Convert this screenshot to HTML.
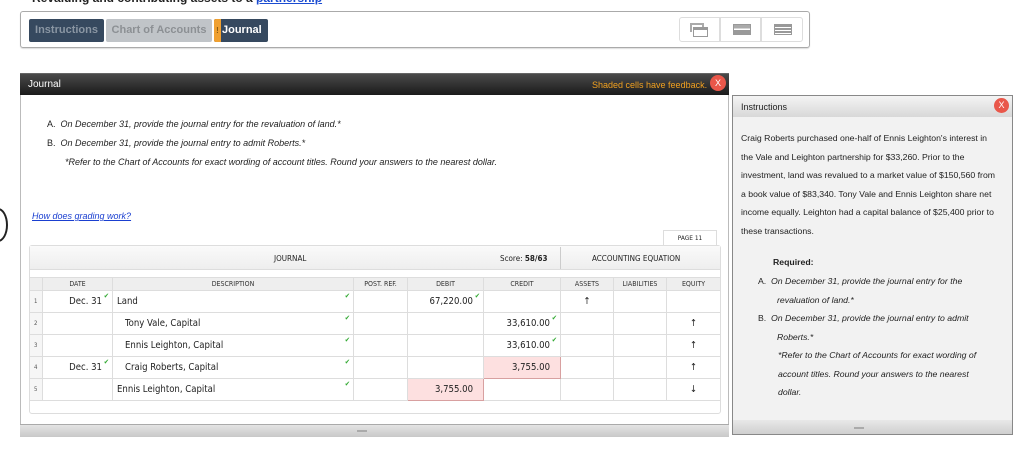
<!DOCTYPE html>
<html><head><meta charset="utf-8"><style>
*{box-sizing:border-box;margin:0;padding:0}
body{width:1024px;height:461px;overflow:hidden;background:#fff;font-family:"Liberation Sans",sans-serif;position:relative;color:#222}
.a{position:absolute}
.tab{position:absolute;top:19px;height:23px;font-size:11px;font-weight:bold;line-height:23px;border-radius:2px;text-align:center}
.ic{position:absolute;top:17px;width:41px;height:25px;border:1px solid #ddd}
.jt{font-family:"DejaVu Sans Condensed","Liberation Sans Narrow","Liberation Sans",sans-serif;font-size:9px;color:#222}
table{border-collapse:collapse;table-layout:fixed;position:absolute;left:29px;top:277px;width:691px}
td{border:1px solid #ddd;height:22px;font-family:"DejaVu Sans Condensed","Liberation Sans Narrow",sans-serif;font-size:9.5px;padding:0 4px;position:relative;color:#222;white-space:nowrap}
tr.h td{height:13px;background:#eee;font-size:7px;text-align:center;color:#333}
.r{text-align:right;padding-right:10px}
.c{text-align:center}
.n{font-size:6px;color:#555;background:#f6f6f6}
.ck{position:absolute;top:1px;right:3px;color:#3a3;font-size:7px}
.bad{background:#fde0e0;border:1px solid #d8a0a0}
</style></head><body>
<div class="a" style="left:32px;top:-9px;font-size:12px;font-weight:bold;color:#222">Revaluing and contributing assets to a <span style="color:#1a4bd1;text-decoration:underline">partnership</span></div>
<div class="a" style="left:20px;top:11px;width:790px;height:37px;border:1px solid #aaa;border-radius:3px;box-shadow:0 1px 1px #ddd"></div>
<div class="tab" style="left:29px;width:75px;background:#36495f;color:#8a96a3">Instructions</div>
<div class="tab" style="left:106px;width:106px;background:#c0c4c8;color:#8c9094">Chart of Accounts</div>
<div class="tab" style="left:214px;width:54px;background:#36495f;color:#fff;text-align:left;padding-left:8px;overflow:hidden"><span style="position:absolute;left:0;top:0;width:7px;height:23px;background:#f0a030;color:#8a5a10;font-size:8px;text-align:center">!</span>Journal</div>
<div class="ic" style="left:679px;border-radius:3px 0 0 3px"><div class="a" style="left:10px;top:5px;width:14px;height:9px;border:2px solid #aaa;border-bottom:none"></div><div class="a" style="left:13px;top:9px;width:15px;height:10px;border:1px solid #999;border-top:3px solid #999;background:#fff"></div></div>
<div class="ic" style="left:720px"><div class="a" style="left:12px;top:6px;width:18px;height:11px;border:1px solid #999;background:linear-gradient(#aaa 0 40%,#fff 40% 55%,#999 55%)"></div></div>
<div class="ic" style="left:761px;width:42px;border-radius:0 3px 3px 0"><div class="a" style="left:12px;top:6px;width:18px;height:11px;border:1px solid #999;background:repeating-linear-gradient(#999 0 2px,#fff 2px 3px)"></div></div>
<div class="a" style="left:-12px;top:208px;width:20px;height:34px;border:2px solid #222;border-radius:50%"></div>
<div class="a" style="left:20px;top:73px;width:709px;height:364px;border:1px solid #bbb;border-top:none"></div>
<div class="a" style="left:20px;top:73px;width:709px;height:22px;background:linear-gradient(#4a4a4a,#1a1a1a);border-top:1px solid #666"></div>
<div class="a" style="left:28px;top:79px;font-size:10px;color:#fff">Journal</div>
<div class="a" style="left:592px;top:80px;font-size:9px;color:#f0a020">Shaded cells have feedback.</div>
<div class="a" style="left:710px;top:75px;width:16px;height:16px;border-radius:50%;background:#e9574a;color:#fff;font-size:9px;text-align:center;line-height:16px">X</div>
<div class="a" style="left:47px;top:115px;font-size:9px;font-style:italic;line-height:19px"><span style="font-style:normal">A.</span>&nbsp; On December 31, provide the journal entry for the revaluation of land.*<br><span style="font-style:normal">B.</span>&nbsp; On December 31, provide the journal entry to admit Roberts.*<br><span style="padding-left:18px">*Refer to the Chart of Accounts for exact wording of account titles. Round your answers to the nearest dollar.</span></div>
<div class="a" style="left:32px;top:211px;font-size:9px;font-style:italic;color:#1a3fd0;text-decoration:underline">How does grading work?</div>
<div class="a jt" style="left:663px;top:230px;width:54px;height:16px;border:1px solid #ddd;border-bottom:none;font-size:6.5px;text-align:center;line-height:14px;background:#fff">PAGE 11</div>
<div class="a" style="left:29px;top:245px;width:692px;height:169px;border:1px solid #ddd;border-radius:3px"></div>
<div class="a" style="left:30px;top:246px;width:690px;height:24px;background:linear-gradient(#fafafa,#eee);border-bottom:1px solid #ddd"></div>
<div class="a jt" style="left:274px;top:254px;font-size:8px">JOURNAL</div>
<div class="a jt" style="left:500px;top:254px;font-size:8px">Score: <b>58/63</b></div>
<div class="a" style="left:560px;top:247px;width:1px;height:22px;background:#ccc"></div>
<div class="a jt" style="left:592px;top:254px;font-size:8px">ACCOUNTING EQUATION</div>
<table>
<colgroup><col style="width:13px"><col style="width:70px"><col style="width:241px"><col style="width:54px"><col style="width:76px"><col style="width:77px"><col style="width:53px"><col style="width:53px"><col style="width:54px"></colgroup>
<tr class="h"><td></td><td>DATE</td><td>DESCRIPTION</td><td>POST. REF.</td><td>DEBIT</td><td>CREDIT</td><td>ASSETS</td><td>LIABILITIES</td><td>EQUITY</td></tr>
<tr><td class="n">1</td><td class="r">Dec. 31<span class="ck">✔</span></td><td>Land<span class="ck">✔</span></td><td></td><td class="r">67,220.00<span class="ck">✔</span></td><td></td><td class="c">↑</td><td></td><td></td></tr>
<tr><td class="n">2</td><td></td><td style="padding-left:12px">Tony Vale, Capital<span class="ck">✔</span></td><td></td><td></td><td class="r">33,610.00<span class="ck">✔</span></td><td></td><td></td><td class="c">↑</td></tr>
<tr style="border-bottom:1px solid #666"><td class="n">3</td><td></td><td style="padding-left:12px">Ennis Leighton, Capital<span class="ck">✔</span></td><td></td><td></td><td class="r">33,610.00<span class="ck">✔</span></td><td></td><td></td><td class="c">↑</td></tr>
<tr><td class="n">4</td><td class="r">Dec. 31<span class="ck">✔</span></td><td style="padding-left:12px">Craig Roberts, Capital<span class="ck">✔</span></td><td></td><td></td><td class="r bad">3,755.00</td><td></td><td></td><td class="c">↑</td></tr>
<tr><td class="n">5</td><td></td><td>Ennis Leighton, Capital<span class="ck">✔</span></td><td></td><td class="r bad">3,755.00</td><td></td><td></td><td></td><td class="c">↓</td></tr>
</table>
<div class="a" style="left:20px;top:424px;width:709px;height:13px;background:linear-gradient(#e4e4e4,#c8c8c8);border-top:1px solid #aaa"></div>
<div class="a" style="left:357px;top:430px;width:10px;height:2px;background:#aaa"></div>
<div class="a" style="left:732px;top:95px;width:281px;height:340px;background:#f2f2f2;border:1px solid #888"></div>
<div class="a" style="left:733px;top:96px;width:279px;height:21px;background:linear-gradient(#f4f4f4,#d8d8d8)"></div>
<div class="a" style="left:741px;top:102px;font-size:9px">Instructions</div>
<div class="a" style="left:994px;top:98px;width:15px;height:15px;border-radius:50%;background:#e9574a;color:#fff;font-size:9px;text-align:center;line-height:15px">X</div>
<div class="a" style="left:741px;top:129px;width:254px;font-size:8.7px;line-height:18.5px">Craig Roberts purchased one-half of Ennis Leighton's interest in the Vale and Leighton partnership for $33,260. Prior to the investment, land was revalued to a market value of $150,560 from a book value of $83,340. Tony Vale and Ennis Leighton share net income equally. Leighton had a capital balance of $25,400 prior to these transactions.</div>
<div class="a" style="left:773px;top:257px;font-size:8.7px;font-weight:bold">Required:</div>
<div class="a" style="left:758px;top:272px;width:232px;font-size:8.7px;font-style:italic;line-height:18.5px">
<div style="padding-left:19px;text-indent:-19px"><span style="font-style:normal">A.</span>&nbsp; On December 31, provide the journal entry for the revaluation of land.*</div>
<div style="padding-left:19px;text-indent:-19px"><span style="font-style:normal">B.</span>&nbsp; On December 31, provide the journal entry to admit Roberts.*</div>
<div style="padding-left:20px;text-indent:0">*Refer to the Chart of Accounts for exact wording of account titles. Round your answers to the nearest dollar.</div>
</div>
<div class="a" style="left:733px;top:420px;width:279px;height:14px;background:linear-gradient(#e8e8e8,#cfcfcf)"></div>
<div class="a" style="left:854px;top:427px;width:10px;height:2px;background:#aaa"></div>
</body></html>
